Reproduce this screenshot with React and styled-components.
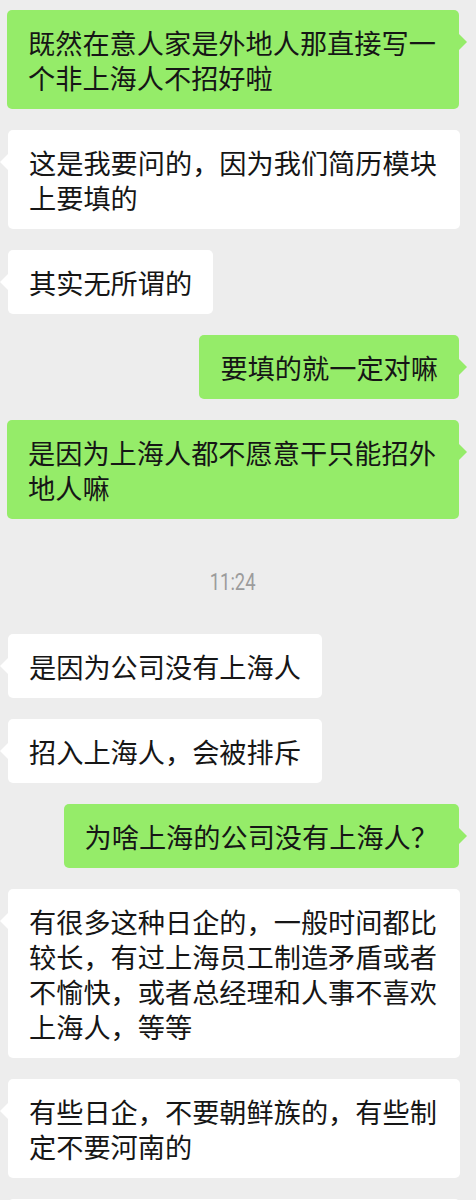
import styled, { createGlobalStyle, css } from "styled-components"

const GlobalStyle = createGlobalStyle`
  html, body {
    margin: 0;
    padding: 0;
    background: #ededed;
  }
  body {
    font-family: "Noto Sans CJK SC", "Noto Sans", sans-serif;
  }
`

const Chat = styled.div`
  display: flex;
  flex-direction: column;
  gap: 21px;
  padding-top: 10px;
  height: 1200px;
  overflow: hidden;
  box-sizing: border-box;
`

const Row = styled.div`
  display: flex;
  justify-content: ${p => (p.$mine ? "flex-end" : "flex-start")};
  padding: ${p => (p.$mine ? "0 17px 0 7px" : "0 16px 0 8px")};
`

const Bubble = styled.div`
  position: relative;
  max-width: 452px;
  box-sizing: border-box;
  padding: 15px 21px 14px;
  border-radius: 5px;
  font-size: 27.2px;
  line-height: 35px;
  color: #161616;
  background: ${p => (p.$mine ? "#95ec69" : "#ffffff")};
  word-break: break-all;

  &::after {
    content: "";
    position: absolute;
    top: 24px;
    border-top: 8px solid transparent;
    border-bottom: 8px solid transparent;
    ${p =>
      p.$mine
        ? css`
            right: -8px;
            border-left: 8px solid #95ec69;
          `
        : css`
            left: -8px;
            border-right: 8px solid #ffffff;
          `}
  }
`

const TimeRow = styled.div`
  display: flex;
  justify-content: center;
  padding: 31px 0 18px;
  margin-right: 10px;
`

const Time = styled.span`
  display: inline-block;
  font-family: Roboto, "Liberation Sans", sans-serif;
  font-size: 23px;
  line-height: 24px;
  color: #9c9c9c;
  transform: scaleX(0.8);
`

const messages = [
  { mine: true, text: "既然在意人家是外地人那直接写一个非上海人不招好啦" },
  { mine: false, text: "这是我要问的，因为我们简历模块上要填的" },
  { mine: false, text: "其实无所谓的" },
  { mine: true, text: "要填的就一定对嘛" },
  { mine: true, text: "是因为上海人都不愿意干只能招外地人嘛" },
  { time: "11:24" },
  { mine: false, text: "是因为公司没有上海人" },
  { mine: false, text: "招入上海人，会被排斥" },
  { mine: true, text: "为啥上海的公司没有上海人？" },
  {
    mine: false,
    text: "有很多这种日企的，一般时间都比较长，有过上海员工制造矛盾或者不愉快，或者总经理和人事不喜欢上海人，等等",
  },
  { mine: false, text: "有些日企，不要朝鲜族的，有些制定不要河南的" },
  { mine: false, text: "我们公司也是，上海人进来待不久的，都走了" },
]

function App() {
  return (
    <>
      <GlobalStyle />
      <Chat>
        {messages.map((m, i) =>
          m.time ? (
            <TimeRow key={i}>
              <Time>{m.time}</Time>
            </TimeRow>
          ) : (
            <Row key={i} $mine={m.mine}>
              <Bubble $mine={m.mine}>{m.text}</Bubble>
            </Row>
          )
        )}
      </Chat>
    </>
  )
}

export default App
